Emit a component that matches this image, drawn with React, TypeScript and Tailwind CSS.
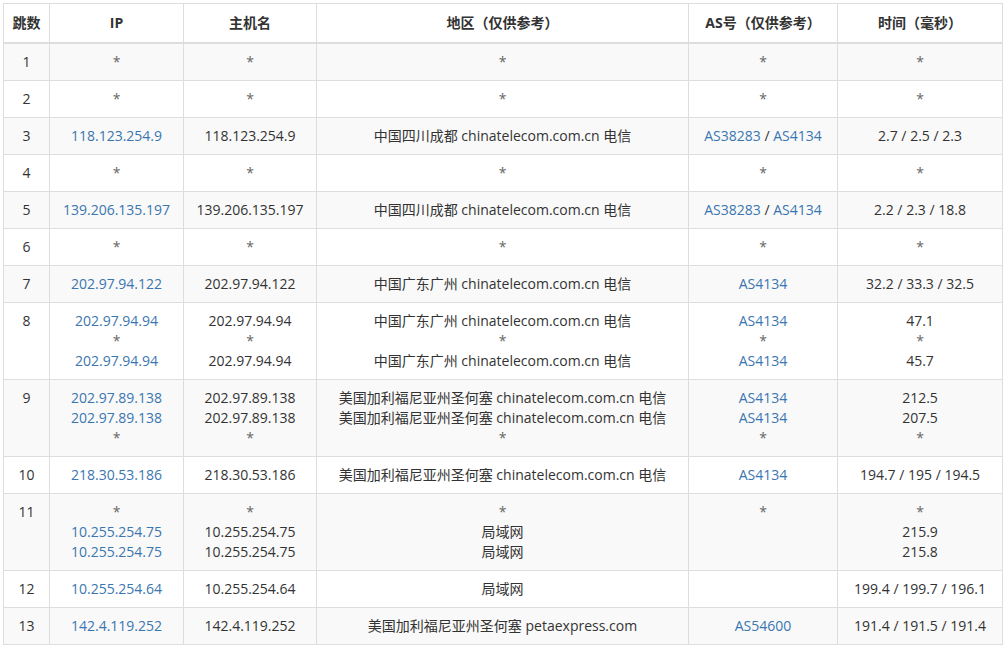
const L = "text-[#3a76b0]";

type Cell = string[];
type Row = { hop: string; ip: Cell; host: Cell; area: Cell; as: Cell; time: Cell };

const s = ["*"];
const rows: Row[] = [
  { hop: "1", ip: s, host: s, area: s, as: s, time: s },
  { hop: "2", ip: s, host: s, area: s, as: s, time: s },
  { hop: "3", ip: ["118.123.254.9"], host: ["118.123.254.9"], area: ["中国四川成都 chinatelecom.com.cn 电信"], as: ["AS38283 / AS4134"], time: ["2.7 / 2.5 / 2.3"] },
  { hop: "4", ip: s, host: s, area: s, as: s, time: s },
  { hop: "5", ip: ["139.206.135.197"], host: ["139.206.135.197"], area: ["中国四川成都 chinatelecom.com.cn 电信"], as: ["AS38283 / AS4134"], time: ["2.2 / 2.3 / 18.8"] },
  { hop: "6", ip: s, host: s, area: s, as: s, time: s },
  { hop: "7", ip: ["202.97.94.122"], host: ["202.97.94.122"], area: ["中国广东广州 chinatelecom.com.cn 电信"], as: ["AS4134"], time: ["32.2 / 33.3 / 32.5"] },
  { hop: "8", ip: ["202.97.94.94", "*", "202.97.94.94"], host: ["202.97.94.94", "*", "202.97.94.94"], area: ["中国广东广州 chinatelecom.com.cn 电信", "*", "中国广东广州 chinatelecom.com.cn 电信"], as: ["AS4134", "*", "AS4134"], time: ["47.1", "*", "45.7"] },
  { hop: "9", ip: ["202.97.89.138", "202.97.89.138", "*"], host: ["202.97.89.138", "202.97.89.138", "*"], area: ["美国加利福尼亚州圣何塞 chinatelecom.com.cn 电信", "美国加利福尼亚州圣何塞 chinatelecom.com.cn 电信", "*"], as: ["AS4134", "AS4134", "*"], time: ["212.5", "207.5", "*"] },
  { hop: "10", ip: ["218.30.53.186"], host: ["218.30.53.186"], area: ["美国加利福尼亚州圣何塞 chinatelecom.com.cn 电信"], as: ["AS4134"], time: ["194.7 / 195 / 194.5"] },
  { hop: "11", ip: ["*", "10.255.254.75", "10.255.254.75"], host: ["*", "10.255.254.75", "10.255.254.75"], area: ["*", "局域网", "局域网"], as: ["*"], time: ["*", "215.9", "215.8"] },
  { hop: "12", ip: ["10.255.254.64"], host: ["10.255.254.64"], area: ["局域网"], as: [""], time: ["199.4 / 199.7 / 196.1"] },
  { hop: "13", ip: ["142.4.119.252"], host: ["142.4.119.252"], area: ["美国加利福尼亚州圣何塞 petaexpress.com"], as: ["AS54600"], time: ["191.4 / 191.5 / 191.4"] },
];

function Lines({ lines, link }: { lines: Cell; link?: boolean }) {
  return (
    <>
      {lines.map((t, i) => {
        if (t === "*") return <div key={i} className="text-[#666]">*</div>;
        if (link && t.includes(" / ")) {
          const [a, b] = t.split(" / ");
          return (
            <div key={i}>
              <span className={L}>{a}</span> / <span className={L}>{b}</span>
            </div>
          );
        }
        return (
          <div key={i} className={link ? L : ""}>
            {t || "\u00a0"}
          </div>
        );
      })}
    </>
  );
}

const td = "border border-[#dddddd] px-2 py-2 align-top text-center";
const th = "border border-[#dddddd] border-b-2 py-[9px] text-center";

export default function App() {
  return (
    <div className="bg-white p-[3px] text-[14px] leading-[20px] text-[#333]" style={{ fontFamily: '"Open Sans","Noto Sans CJK SC",sans-serif' }}>
      <table className="w-[999px] border-collapse table-fixed">
        <colgroup>
          <col className="w-[46px]" />
          <col className="w-[134px]" />
          <col className="w-[133px]" />
          <col className="w-[372px]" />
          <col className="w-[149px]" />
          <col className="w-[165px]" />
        </colgroup>
        <thead>
          <tr className="font-bold">
            <th className={th}>跳数</th>
            <th className={th}>IP</th>
            <th className={th}>主机名</th>
            <th className={th}>地区（仅供参考）</th>
            <th className={th}>AS号（仅供参考）</th>
            <th className={th}>时间（毫秒）</th>
          </tr>
        </thead>
        <tbody>
          {rows.map((r, i) => (
            <tr key={r.hop} className={i % 2 === 0 ? "bg-[#f9f9f9]" : "bg-white"}>
              <td className={td}>{r.hop}</td>
              <td className={td}><Lines lines={r.ip} link /></td>
              <td className={td}><Lines lines={r.host} /></td>
              <td className={td}><Lines lines={r.area} /></td>
              <td className={td}><Lines lines={r.as} link /></td>
              <td className={td}><Lines lines={r.time} /></td>
            </tr>
          ))}
        </tbody>
      </table>
    </div>
  );
}
